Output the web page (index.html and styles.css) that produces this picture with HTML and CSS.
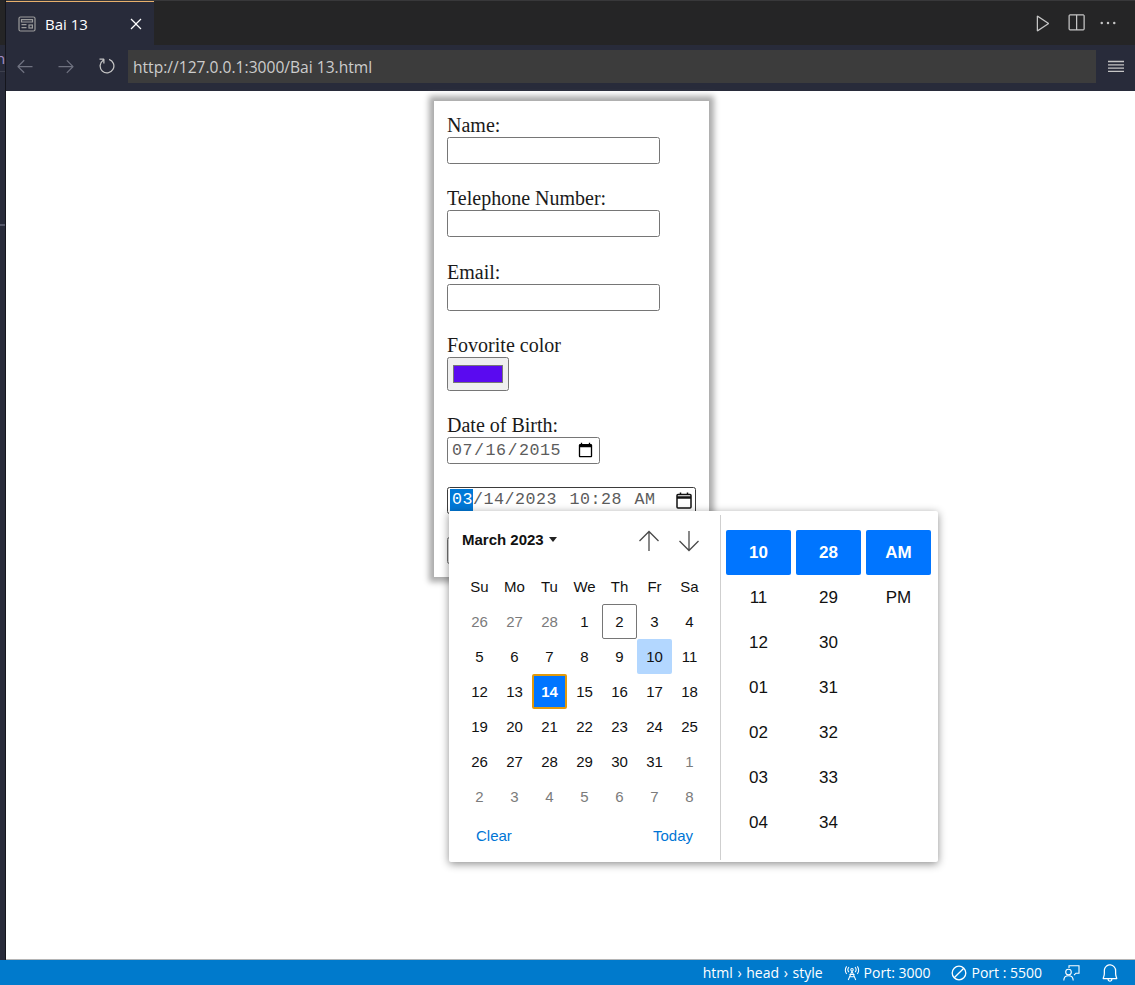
FILE: index.html
```html
<!DOCTYPE html>
<html lang="en">
<head>
  <meta charset="UTF-8">
  <meta name="viewport" content="width=device-width, initial-scale=1.0">
  <title>Bai 13</title>
  <link rel="stylesheet" href="styles.css">
</head>
<body>
  <div class="window">
    <div class="side-strip">
      <div class="side-top"></div>
      <div class="side-clip">n</div>
      <div class="side-rest"></div>
    </div>

    <div class="main">
      <div class="tabbar">
        <div class="tab">
          <svg class="tab-icon" width="18" height="16" viewBox="0 0 18 16" fill="none" stroke="#9b9b9b" stroke-width="1.2">
            <rect x="1" y="1" width="16" height="14" rx="1.5"/>
            <path d="M3.5 3.6h11v2.4h-11z"/>
            <path d="M3.5 8.6h5M3.5 11.6h5"/>
            <rect x="11" y="9" width="3.4" height="3"/>
          </svg>
          <span class="tab-title">Bai 13</span>
          <svg width="20" height="20" viewBox="0 0 16 16" fill="#fff">
            <path d="M8 8.707l3.646 3.647.708-.707L8.707 8l3.647-3.646-.707-.708L8 7.293 4.354 3.646l-.707.708L7.293 8l-3.646 3.646.707.708L8 8.707z"/>
          </svg>
        </div>
        <div class="tab-actions">
          <svg width="20" height="20" viewBox="0 0 16 16" fill="#c5c5c5">
            <path d="M3.78 2L3 2.41v12l.78.42 9-6V8l-9-6zM4 13.48V3.35l7.6 5.07L4 13.48z"/>
          </svg>
          <svg width="20" height="20" viewBox="0 0 16 16" fill="#c5c5c5">
            <path d="M14 1H3L2 2v11l1 1h11l1-1V2l-1-1zM8 13H3V2h5v11zm6 0H9V2h5v11z"/>
          </svg>
          <svg width="20" height="20" viewBox="0 0 16 16" fill="#c5c5c5">
            <path d="M4 8a1 1 0 1 1-2 0 1 1 0 0 1 2 0zm5 0a1 1 0 1 1-2 0 1 1 0 0 1 2 0zm5 0a1 1 0 1 1-2 0 1 1 0 0 1 2 0z"/>
          </svg>
        </div>
      </div>

      <div class="toolbar">
        <svg class="nav-icon" width="20" height="20" viewBox="0 0 16 16" fill="#6f7280">
          <path d="M7 3.093l-5 5V8.800l5 5 .707-.707-4.146-4.147H14v-1H3.560L7.708 3.800 7 3.093z"/>
        </svg>
        <svg class="nav-icon" width="20" height="20" viewBox="0 0 16 16" fill="#6f7280">
          <path d="M9 13.887l5-5V8.180l-5-5-.707.707 4.146 4.147H2v1h10.440L8.292 13.180 9 13.887z"/>
        </svg>
        <svg class="nav-icon" width="20" height="20" viewBox="0 0 16 16" fill="#c5c5c5">
          <path d="M4.681 3H2V2h3.500l.5.500V6H5V4a5 5 0 1 0 4.530-.761l.302-.954A6 6 0 1 1 4.681 3z"/>
        </svg>
        <div class="url-bar">http://127.0.0.1:3000/Bai 13.html</div>
        <svg class="menu-icon" width="16" height="13" viewBox="0 0 16 13" stroke="#c5c5c5" stroke-width="1.300">
          <path d="M0 1.500h16M0 4.800h16M0 8.100h16M0 11.400h16"/>
        </svg>
      </div>

      <div class="page">
        <form class="card">
          <div class="field">
            <label for="name">Name:</label>
            <input type="text" id="name" class="text-input">
          </div>
          <div class="field">
            <label for="phone">Telephone Number:</label>
            <input type="tel" id="phone" class="text-input">
          </div>
          <div class="field">
            <label for="email">Email:</label>
            <input type="email" id="email" class="text-input">
          </div>
          <div class="field">
            <label for="color">Fovorite color</label>
            <input type="color" id="color" class="color-input" value="#5a0af0">
          </div>
          <div class="field">
            <label for="dob">Date of Birth:</label>
            <input type="date" id="dob" class="date-input" value="2015-07-16">
          </div>
          <div class="datetime-field">
            <span class="seg-active">03</span><span class="seg-rest">/14/2023 10:28 AM</span>
            <svg class="cal-icon" width="16" height="17" viewBox="0 0 16 17" fill="none" stroke="#111" stroke-width="1.500">
              <rect x="1" y="2.500" width="14" height="13.500" rx="1"/>
              <path d="M1 5.500h14" stroke-width="2.500"/>
              <path d="M4.500.5v2M11.500.5v2"/>
            </svg>
          </div>
          <button type="submit" class="submit-btn" aria-label="Submit"></button>
        </form>

        <div class="picker">
          <div class="picker-left">
            <div class="picker-head">
              <span class="month-label">March 2023</span>
              <span class="caret"></span>
              <svg class="arrow-up" width="22" height="22" viewBox="0 0 22 22" fill="none" stroke="#4a4a4a" stroke-width="1.300">
                <path d="M11 21V1.500M1.500 11L11 1.500 20.500 11"/>
              </svg>
              <svg class="arrow-down" width="22" height="22" viewBox="0 0 22 22" fill="none" stroke="#4a4a4a" stroke-width="1.300">
                <path d="M11 1v19.500M1.500 11L11 20.500 20.500 11"/>
              </svg>
            </div>
            <div class="day-grid">
              <span class="wd">Su</span><span class="wd">Mo</span><span class="wd">Tu</span><span class="wd">We</span><span class="wd">Th</span><span class="wd">Fr</span><span class="wd">Sa</span>
              <span class="day muted">26</span><span class="day muted">27</span><span class="day muted">28</span><span class="day">1</span><span class="day today-box">2</span><span class="day">3</span><span class="day">4</span>
              <span class="day">5</span><span class="day">6</span><span class="day">7</span><span class="day">8</span><span class="day">9</span><span class="day hover">10</span><span class="day">11</span>
              <span class="day">12</span><span class="day">13</span><span class="day selected">14</span><span class="day">15</span><span class="day">16</span><span class="day">17</span><span class="day">18</span>
              <span class="day">19</span><span class="day">20</span><span class="day">21</span><span class="day">22</span><span class="day">23</span><span class="day">24</span><span class="day">25</span>
              <span class="day">26</span><span class="day">27</span><span class="day">28</span><span class="day">29</span><span class="day">30</span><span class="day">31</span><span class="day muted">1</span>
              <span class="day muted">2</span><span class="day muted">3</span><span class="day muted">4</span><span class="day muted">5</span><span class="day muted">6</span><span class="day muted">7</span><span class="day muted">8</span>
            </div>
            <div class="picker-foot">
              <a href="#">Clear</a>
              <a href="#">Today</a>
            </div>
          </div>
          <div class="picker-right">
            <div class="time-col">
              <span class="time active">10</span><span class="time">11</span><span class="time">12</span><span class="time">01</span><span class="time">02</span><span class="time">03</span><span class="time">04</span>
            </div>
            <div class="time-col">
              <span class="time active">28</span><span class="time">29</span><span class="time">30</span><span class="time">31</span><span class="time">32</span><span class="time">33</span><span class="time">34</span>
            </div>
            <div class="time-col">
              <span class="time active">AM</span><span class="time">PM</span>
            </div>
          </div>
        </div>
      </div>
    </div>
  </div>

  <div class="statusbar">
    <span class="status-item crumbs">html › head › style</span>
    <span class="status-item">
      <svg width="16" height="16" viewBox="0 0 17 16" fill="none" stroke="#fff" stroke-width="1.100">
        <path d="M8.500 6L4.500 15.500M8.500 6l4 9.500M6 12h5M5.800 9.500h5.400"/>
        <circle cx="8.500" cy="4.500" r="1.300"/>
        <path d="M5.300 7.200a4 4 0 0 1 0-5.400M11.700 7.200a4 4 0 0 0 0-5.400M2.800 9a7 7 0 0 1 0-8M14.200 9a7 7 0 0 0 0-8"/>
      </svg>
      Port: 3000
    </span>
    <span class="status-item">
      <svg width="16" height="16" viewBox="0 0 16 16" fill="none" stroke="#fff" stroke-width="1.300">
        <circle cx="8" cy="8" r="6.800"/>
        <path d="M3.200 12.800l9.600-9.600"/>
      </svg>
      Port : 5500
    </span>
    <svg class="status-icon" width="17" height="16" viewBox="0 0 17 16" fill="none" stroke="#fff" stroke-width="1.100">
      <path d="M6 3V.8h10v7.400h-3l-2 2"/>
      <circle cx="5.500" cy="7" r="2.800"/>
      <path d="M.8 15.500c0-3 2-4.800 4.700-4.800s4.700 1.800 4.700 4.800"/>
    </svg>
    <svg class="status-icon" width="20" height="20" viewBox="0 0 16 16" fill="#fff">
      <path d="M13.377 10.573a7.630 7.630 0 0 1-.383-2.380V6.195a5.115 5.115 0 0 0-1.268-3.446 5.138 5.138 0 0 0-3.242-1.722c-.694-.072-1.400 0-2.070.227-.670.215-1.280.574-1.794 1.053a4.923 4.923 0 0 0-1.208 1.675 5.067 5.067 0 0 0-.431 2.022v2.200a7.610 7.610 0 0 1-.383 2.370L2 12.343l.479.658h3.505c0 .526.215 1.040.586 1.412.370.370.885.586 1.412.586.526 0 1.040-.215 1.411-.586s.587-.886.587-1.412h3.505l.478-.658-.586-1.770zm-4.690 3.147a.997.997 0 0 1-.705.299.997.997 0 0 1-.706-.300.997.997 0 0 1-.300-.705h1.999a.939.939 0 0 1-.287.706zm-5.515-1.710l.371-1.114a8.633 8.633 0 0 0 .443-2.691V6.004c0-.563.120-1.113.347-1.616.227-.514.550-.969.969-1.340.419-.382.910-.670 1.436-.837.538-.180 1.100-.240 1.650-.180a4.147 4.147 0 0 1 2.597 1.400 4.133 4.133 0 0 1 1.004 2.776v2.010c0 .909.144 1.818.443 2.691l.371 1.113h-9.630v-.012z"/>
    </svg>
  </div>
</body>
</html>
```

FILE: styles.css
```css
* {
  box-sizing: border-box;
}
body {
  margin: 0;
  height: 985px;
  display: flex;
  flex-direction: column;
  overflow: hidden;
  background-color: #fff;
  font-family: "Open Sans", "Liberation Sans", sans-serif;
}
.window {
  display: flex;
  height: 960px;
}

/* left edge of the editor, cut off by the panel */
.side-strip {
  width: 6px;
  display: flex;
  flex-direction: column;
  border-right: 1px solid #14151c;
  background-color: #282b3a;
}
.side-top {
  height: 45px;
  background-color: #252526;
}
.side-clip {
  height: 27px;
  overflow: hidden;
  border-bottom: 1px solid #3d404d;
  color: #a58fc9;
  font-size: 15px;
  line-height: 27px;
  text-indent: -4px;
}
.side-rest {
  flex: 1;
  margin-top: 152px;
  border-top: 2px solid #55586a;
}

.main {
  flex: 1;
  display: flex;
  flex-direction: column;
}
.tabbar {
  height: 45px;
  display: flex;
  justify-content: space-between;
  background-color: #252526;
  border-top: 1px solid #38383a;
}
.tab {
  width: 148px;
  display: flex;
  align-items: center;
  padding-left: 12px;
  background-color: #282b3a;
  border-top: 1px solid #e8b06c;
  color: #fff;
  font-size: 15px;
}
.tab-title {
  margin-left: 9px;
  width: 80.500px;
}
.tab-actions {
  display: flex;
  align-items: center;
  gap: 12.500px;
  padding-right: 17px;
}
.toolbar {
  height: 46px;
  display: flex;
  align-items: center;
  padding-left: 8.500px;
  padding-bottom: 4px;
  background-color: #282b3a;
}
.nav-icon {
  margin-right: 21px;
}
.nav-icon:nth-of-type(3) {
  margin-right: 11.500px;
}
.url-bar {
  width: 968px;
  height: 33px;
  padding-left: 5px;
  background-color: #3c3c3c;
  color: #cccccc;
  font-size: 15.600px;
  line-height: 35px;
}
.menu-icon {
  margin-left: 12px;
}

.page {
  flex: 1;
  position: relative;
  background-color: #fff;
  border-bottom: 1px solid #b5b5b5;
}
.card {
  width: 275px;
  margin: 10px 0 0 428px;
  padding: 12.900px 13px 13px;
  display: flex;
  flex-direction: column;
  align-items: flex-start;
  gap: 23.400px;
  background-color: #fff;
  box-shadow: 0 0 6px 5px #ababab;
  font-family: "Liberation Serif", serif;
  font-size: 20px;
}
.field label {
  display: block;
  height: 23px;
  line-height: 23px;
  color: #1a1a1a;
}
.field input {
  display: block;
  margin: 0;
  border: 1px solid #767676;
  border-radius: 2.500px;
  background-color: #fff;
}
.field .text-input {
  width: 213px;
  height: 27px;
}
.field .color-input {
  width: 62px;
  height: 33.600px;
  padding: 7px 5px;
  background-color: #efefef;
}
.color-input::-webkit-color-swatch-wrapper {
  padding: 0;
}
.color-input::-webkit-color-swatch {
  border: 1px solid #777;
}
.field .date-input {
  width: 153px;
  height: 26.800px;
  padding: 0 3px;
  font-family: "Liberation Mono", monospace;
  font-size: 16.670px;
  letter-spacing: .5px;
  color: #5c5c5c;
}
.datetime-field {
  width: 249px;
  height: 26.600px;
  display: flex;
  align-items: flex-start;
  padding: 1px 3px 0 2px;
  border: 1px solid #3b3b3b;
  border-radius: 2.500px;
  font-family: "Liberation Mono", monospace;
  font-size: 16.670px;
  letter-spacing: .5px;
  line-height: 22px;
  color: #5c5c5c;
}
.seg-active {
  padding-left: 2px;
  background-color: #0078d7;
  color: #fff;
}
.seg-rest {
  flex: 1;
  word-spacing: 2px;
  white-space: pre;
}
.cal-icon {
  margin-top: 3px;
}
.submit-btn {
  width: 80px;
  height: 27px;
  padding: 0;
  border: 1px solid #767676;
  border-radius: 2.500px;
  background-color: #efefef;
}

/* calendar popup lies over the form */
.picker {
  position: absolute;
  left: 443px;
  top: 420px;
  width: 489px;
  height: 351px;
  display: flex;
  background-color: #fff;
  border-radius: 2px;
  box-shadow: 0 2px 8px rgba(0, 0, 0, 0.45);
  font-family: "Liberation Sans", Arial, sans-serif;
  color: #111;
}
.picker-left {
  width: 272px;
  margin: 4px 0 2px;
  padding-left: 13px;
  border-right: 1px solid #cfcfcf;
}
.picker-head {
  height: 54px;
  display: flex;
  align-items: center;
  padding-bottom: 6px;
}
.month-label {
  font-size: 15px;
  font-weight: bold;
}
.caret {
  width: 0;
  height: 0;
  margin-left: 5px;
  border-left: 4.500px solid transparent;
  border-right: 4.500px solid transparent;
  border-top: 5px solid #222;
}
.arrow-up {
  margin-left: 81px;
  margin-top: 4px;
}
.arrow-down {
  margin-left: 18px;
  margin-top: 4px;
}
.day-grid {
  display: grid;
  grid-template-columns: repeat(7, 35px);
  grid-auto-rows: 35px;
  font-size: 15px;
}
.wd,
.day {
  display: flex;
  align-items: center;
  justify-content: center;
}
.day.muted {
  color: #7b7b7b;
}
.day.today-box {
  border: 1px solid #767676;
  border-radius: 2px;
}
.day.hover {
  background-color: #b3d7ff;
  border-radius: 2px;
}
.day.selected {
  background-color: #0075ff;
  border: 2px solid #e29a0b;
  border-radius: 2px;
  color: #fff;
  font-weight: bold;
}
.picker-foot {
  display: flex;
  justify-content: space-between;
  padding: 13px 14px 0;
  width: 245px;
  font-size: 15px;
}
.picker-foot a {
  color: #0075d5;
  text-decoration: none;
}
.picker-right {
  flex: 1;
  display: flex;
  gap: 5px;
  padding: 19px 0 0 5px;
}
.time-col {
  width: 65px;
  display: flex;
  flex-direction: column;
}
.time {
  height: 45px;
  display: flex;
  align-items: center;
  justify-content: center;
  font-size: 17px;
}
.time.active {
  background-color: #0075ff;
  border-radius: 2px;
  color: #fff;
  font-weight: bold;
}

.statusbar {
  height: 25px;
  display: flex;
  align-items: center;
  justify-content: flex-end;
  padding-right: 5px;
  background-color: #007acc;
  color: #fff;
  font-size: 14px;
}
.status-item {
  display: flex;
  align-items: center;
  gap: 4px;
  margin-right: 21px;
}
.crumbs {
  word-spacing: 1px;
}
.status-icon {
  margin-right: 19.500px;
}
.status-icon:last-child {
  margin-right: 10.500px;
}
```
